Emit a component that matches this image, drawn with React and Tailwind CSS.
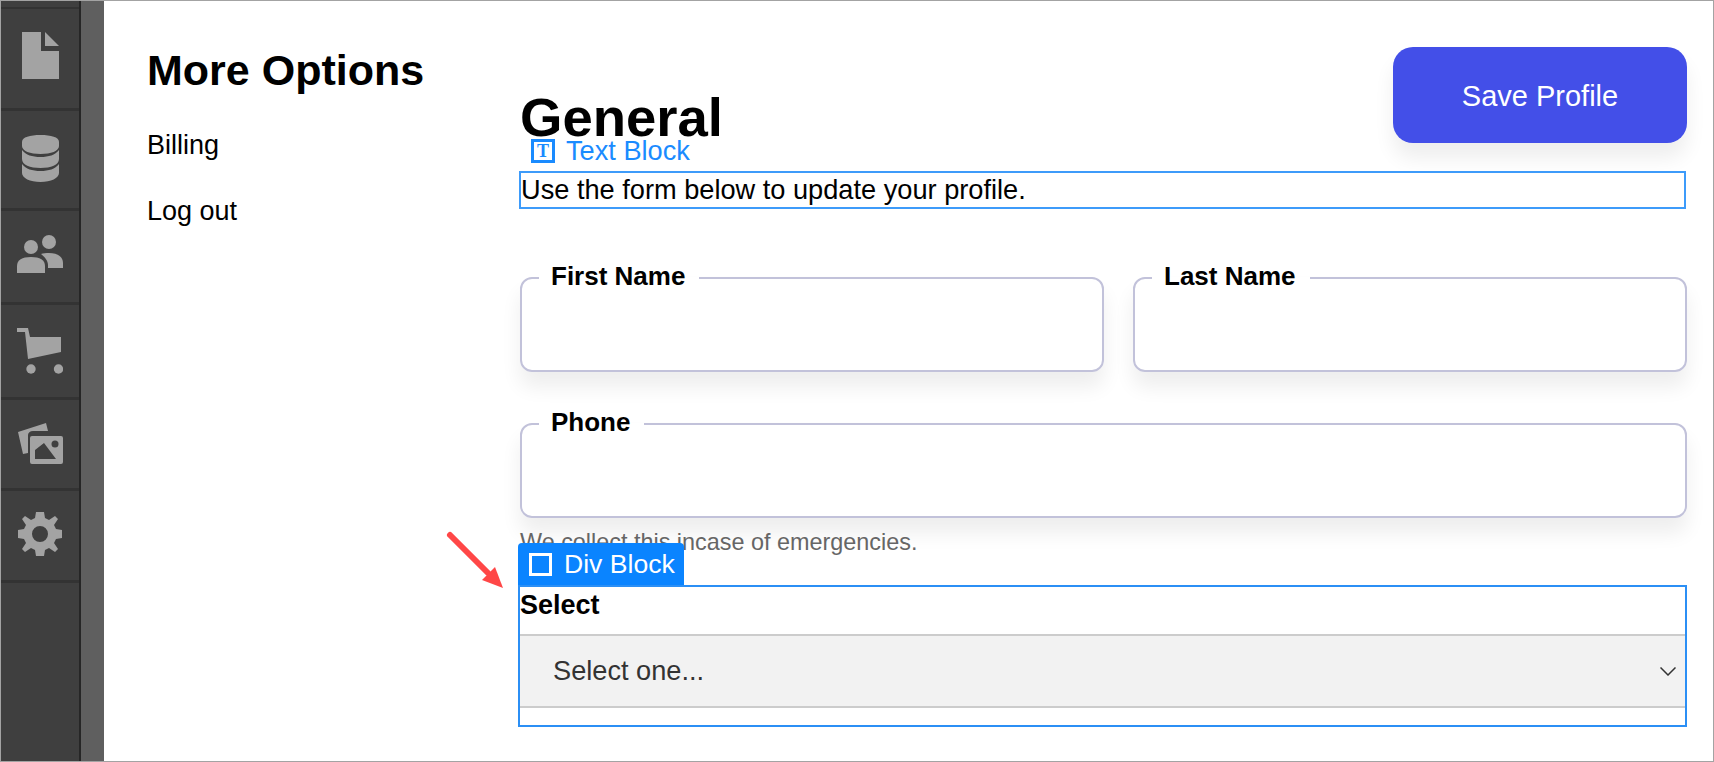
import React from "react";

const Field = ({ label, className = "" }) => {
  return (
    <fieldset className={"h-[109px] rounded-[12px] border-2 border-[#c2c2da] pl-[17px] shadow-[0_15px_20px_rgba(0,0,0,0.07)] " + className}>
      <legend className="pl-[12px] pr-[14px] pb-[4px] text-[26px] font-bold leading-[26px] text-black">{label}</legend>
    </fieldset>
  );
};

const SideRow = ({ className, children }) => {
  return (
    <div className={"flex justify-center border-b-[3px] border-[#333333] " + className}>{children}</div>
  );
};

const App = () => {
  return (
    <div className="flex h-[762px] w-[1714px] overflow-hidden border border-[#a3a3a3] bg-white font-['Liberation_Sans',Arial,sans-serif]">
      {/* Sidebar */}
      <div className="flex w-[103px] shrink-0 bg-[#5f5f5f]">
        <div className="h-full w-[80px] border-r-[2px] border-[#262626] bg-[#3f3f3f]">
          <div className="h-[8px] border-b-[2px] border-[#333333]"></div>
          <SideRow className="h-[102px] pt-[23px]">
            <svg width="37" height="47" viewBox="0 0 37 47" fill="#a3a3a3">
              <path d="M0 0H19V19H37V47H0Z" />
              <path d="M23 0L37 14H23Z" />
            </svg>
          </SideRow>
          <SideRow className="h-[100px] pt-[24px]">
            <svg width="37" height="47" viewBox="0 0 37 47" fill="#a3a3a3">
              <path d="M0 7C0 2 8 0 18.5 0S37 2 37 7V11C37 16 29 19 18.5 19S0 16 0 11Z" />
              <path d="M0 15C4 20 10 22 18.500 22S33 20 37 15V24C37 30 29 33 18.5 33S0 30 0 24Z" />
              <path d="M0 29C4 34 10 36 18.500 36S33 34 37 29V38C37 43 29 47 18.5 47S0 43 0 38Z" />
            </svg>
          </SideRow>
          <SideRow className="h-[94px] pt-[24px]">
            <svg width="46" height="38" viewBox="0 0 46 38" fill="#a3a3a3">
              <circle cx="32" cy="7" r="7" />
              <circle cx="14" cy="12" r="7" />
              <path d="M0 38V31C0 25 5 22 14 22S28 25 28 31V38Z" />
              <path d="M24 19C26 18 29 18 32 18C41 18 46 22 46 28V33H31V30C31 26 28 22 24 19Z" />
            </svg>
          </SideRow>
          <SideRow className="h-[95px] pt-[23px]">
            <svg width="46" height="46" viewBox="0 0 46 46" fill="#a3a3a3">
              <path d="M0 0H11L13 9H44V24L11 31L8 4H0Z" />
              <circle cx="14" cy="41" r="4.7" />
              <circle cx="41.500" cy="41" r="4.7" />
            </svg>
          </SideRow>
          <SideRow className="h-[91px] pt-[23px]">
            <svg width="46" height="42" viewBox="0 0 46 42" fill="#a3a3a3">
              <path d="M1 9L29 0L31 8H16C13 8 11 10 11 12V30L6 31Z" />
              <path fillRule="evenodd" d="M15 13H44Q46 13 46 15V39Q46 41 44 41H15Q13 41 13 39V15Q13 13 15 13ZM18 36H39L27 20L18 27Z" />
              <circle cx="38" cy="21" r="3.500" fill="#3f3f3f" />
            </svg>
          </SideRow>
          <SideRow className="h-[92px] pt-[21px]">
            <svg width="44" height="44" viewBox="0 0 44 44" fill="#a3a3a3">
              <path fillRule="evenodd" d="M18 0H26L27 6L31 8L37 4L40 7L36 13L38 17L44 18V26L38 27L36 31L40 37L37 40L31 36L27 38L26 44H18L17 38L13 36L7 40L4 37L8 31L6 27L0 26V18L6 17L8 13L4 7L7 4L13 8L17 6ZM22 14A8 8 0 1 0 22 30A8 8 0 1 0 22 14Z" />
            </svg>
          </SideRow>
        </div>
      </div>

      {/* More Options */}
      <div className="w-[416px] shrink-0 pl-[43px] pt-[44px] text-black">
        <h2 className="text-[43px] font-bold leading-[50px]">More Options</h2>
        <p className="mt-[35px] text-[27px] leading-[30px]">Billing</p>
        <p className="mt-[36px] text-[27px] leading-[30px]">Log out</p>
      </div>

      {/* General form */}
      <div className="w-[1167px] shrink-0 pt-[46px]">
        <div className="flex h-[125px] items-start justify-between">
          <h1 className="mt-[41px] text-[54.5px] font-bold leading-[60px] text-black">General</h1>
          <button className="h-[96px] w-[294px] rounded-[20px] bg-[#434fe8] pt-[3px] text-[29px] text-white shadow-[0_15px_20px_rgba(0,0,0,0.07)]">
            Save Profile
          </button>
        </div>

        <div className="relative mr-[2px] h-[36px] pl-[1px] text-[27.2px] leading-[36px] text-black outline-2 -outline-offset-1 outline-[#3d9bfa]">
          <div className="absolute left-[11px] top-[-37px] flex items-center gap-[11px] text-[#1a8bff]">
            <span className="flex h-[24px] w-[24px] items-center justify-center border-[3px] border-[#1a8bff] font-['Liberation_Serif',serif] text-[18px] font-bold leading-none">T</span>
            <span className="text-[27.2px] leading-[32px]">Text Block</span>
          </div>
          Use the form below to update your profile.
        </div>

        <div className="mt-[55px] flex gap-[29px]">
          <Field label="First Name" className="w-[584px]" />
          <Field label="Last Name" className="flex-1" />
        </div>

        <Field label="Phone" className="mt-[37px] w-full" />
        <p className="mt-[10px] text-[23.4px] leading-[28px] text-[#666666]">We collect this incase of emergencies.</p>

        <div className="relative mr-[2px] mt-[31px] h-[138px] text-black outline-2 outline-[#2b8ff5]">
          {/* Callout arrow */}
          <svg className="absolute left-[-75px] top-[-57px]" width="62" height="62" viewBox="0 0 62 62">
            <path d="M5 5L43 43" stroke="#ff4747" strokeWidth="6" strokeLinecap="round" />
            <path d="M58 58L37 50L50 37Z" fill="#ff4747" />
          </svg>
          <div className="absolute left-[-2px] top-[-44px] flex h-[42px] w-[166px] items-center gap-[12px] rounded-t-[4px] bg-[#0a84ff] pl-[11px] text-white">
            <span className="h-[23px] w-[23px] border-[3px] border-white"></span>
            <span className="text-[26.6px] leading-[32px]">Div Block</span>
          </div>
          <p className="pt-[3px] text-[27px] font-bold leading-[30px]">Select</p>
          <div className="relative mt-[14px] flex h-[74px] items-center border-y-2 border-[#cccccc] bg-[#f2f2f2] pl-[33px] text-[27.2px] text-[#333333]">
            Select one...
            <svg className="absolute right-[9px] top-[31px]" width="16" height="9" viewBox="0 0 16 9" fill="none" stroke="#333333" strokeWidth="1.5">
              <path d="M0.5 0.5L8 8L15.5 0.5" />
            </svg>
          </div>
        </div>
      </div>
    </div>
  );
};

export default App;
